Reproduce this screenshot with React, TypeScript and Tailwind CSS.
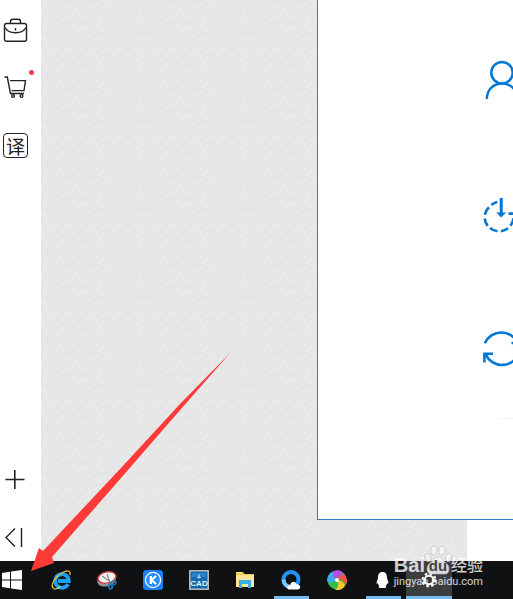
import type { ReactNode } from "react";

const iconBtn = "relative flex h-[25px] w-[25px] items-center justify-center text-[#222]";

function Wallpaper() {
  return (
    <svg className="absolute inset-0 h-full w-full" aria-hidden="true">
      <defs>
        <pattern id="weave" width="52" height="44" patternUnits="userSpaceOnUse">
          <rect width="52" height="44" fill="#e6e6e6" />
          <path
            d="M1 7l5-5M7 11l6-6M14 7l4-4M19 12l7-7M27 8l5-5M33 12l4-4M39 7l5-5M45 11l6-6M0 17l4-4M5 21l6-6M14 19l4-4M20 22l5-5M28 18l5-5M34 22l7-7M43 18l4-4M47 22l4-4M2 29l6-6M9 32l4-4M15 29l5-5M22 33l6-6M30 28l4-4M36 32l5-5M43 29l6-6M1 40l4-4M6 43l6-6M15 41l5-5M22 43l4-4M29 41l6-6M37 43l4-4M44 41l5-5"
            stroke="#ececec"
            strokeWidth="1.200"
          />
          <path
            d="M4 10l2-2M16 13l3-3M29 13l2-2M42 12l2-2M10 24l2-2M25 22l2-2M40 24l2-2M4 35l3-3M19 36l2-2M33 36l2-2M47 34l2-2"
            stroke="#e1e1e1"
          />
        </pattern>
      </defs>
      <rect width="100%" height="100%" fill="url(#weave)" />
    </svg>
  );
}

function Sidebar() {
  return (
    <aside className="relative flex w-[41px] shrink-0 flex-col justify-between bg-white pt-[17px] pb-[11px] pl-[3px]">
      <div className="flex flex-col gap-[33px]">
        <button className={iconBtn} aria-label="Toolbox">
          <svg width="25" height="25" viewBox="0 0 25 25" fill="none" stroke="currentColor" strokeWidth="1.400">
            <rect x="1.500" y="6.500" width="22" height="17.800" rx="2" />
            <path d="M7.500 6.500V4.500q0-2.300 2.300-2.300h5.400q2.300 0 2.300 2.300v2M2 10.500c2 4 6.500 5.300 10.500 5.300s8.500-1.300 10.500-5.300M12.500 11v2.500" />
          </svg>
        </button>
        <button className={iconBtn} aria-label="Shopping">
          <svg width="25" height="25" viewBox="0 0 25 25" fill="none" stroke="currentColor" strokeWidth="1.400">
            <path d="M1.500 2h2.800L7.500 18.500H21M7 5.600h15.500L21 15.600H8.600" />
            <circle cx="10" cy="21" r="1.400" />
            <circle cx="18.500" cy="21" r="1.400" />
          </svg>
          <span className="absolute -top-[5px] -right-[6px] h-[5px] w-[5px] rounded-full bg-[#fb3a48]" />
        </button>
        <button className={`${iconBtn} rounded-[4px] border border-[#222] text-[19px] leading-none font-['Noto_Sans_CJK_SC',sans-serif]`}>
          译
        </button>
      </div>
      <div className="flex flex-col gap-[33px]">
        <button className={iconBtn} aria-label="Add">
          <svg width="25" height="25" viewBox="0 0 25 25" stroke="currentColor" strokeWidth="1.600">
            <path d="M2.500 12.500h19M11.800 3v19" />
          </svg>
        </button>
        <button className={iconBtn} aria-label="Collapse">
          <svg width="25" height="25" viewBox="0 0 25 25" fill="none" stroke="currentColor" strokeWidth="1.400">
            <path d="M12 3.500L3 12.500l9 9M18.500 3v19" />
          </svg>
        </button>
      </div>
    </aside>
  );
}

function SettingsWindow() {
  return (
    <section className="flex flex-1 flex-col overflow-hidden border-b border-l border-[#2b83c6] bg-white pt-[60px] pl-[165px]">
      <div className="flex flex-col gap-[94px] text-[#0078d7]">
        <svg className="shrink-0" width="36" height="40" viewBox="0 0 36 40" fill="none" stroke="currentColor" strokeWidth="2.500">
          <circle cx="19" cy="12.700" r="10.700" />
          <path d="M3.800 39C4 29.500 10.500 23.400 19 23.400S34 29.500 34.200 39" />
        </svg>
        <svg className="shrink-0" width="36" height="40" viewBox="0 0 36 40" fill="none" stroke="currentColor" strokeWidth="2.600">
          <path d="M14.300 8a14.600 14.600 0 0 0-6 3M6 13.300a14.600 14.600 0 0 0-4.200 7.400M1.700 24.500a14.600 14.600 0 0 0 3 7.400M7 34a14.600 14.600 0 0 0 7.500 3.200M18 37.200a14.600 14.600 0 0 0 7-3M27.300 31.800a14.600 14.600 0 0 0 3.200-7.600M25.500 19.600h7" />
          <path d="M18.200 4v16" strokeWidth="3" />
          <path d="M13.200 18.500h10l-5 5z" fill="currentColor" stroke="none" />
        </svg>
        <svg className="shrink-0" width="36" height="40" viewBox="0 0 36 40" fill="none" stroke="currentColor" strokeWidth="2.600">
          <path d="M1.800 15.300a18 18 0 0 1 33 0M36 25a18 18 0 0 1-33.500 1" />
          <path d="M10 25.700H1.400v8.700M36 4v11h-7.500" />
        </svg>
      </div>
      <hr className="mt-[50px] ml-[16px] border-[#f2f2f2]" />
    </section>
  );
}

type Task = { name: string; icon: ReactNode; running?: boolean; active?: boolean };

const tasks: Task[] = [
  {
    name: "Internet Explorer",
    icon: (
      <>
        <path d="M17 14.200a6.800 6.800 0 1 1 .8-3.200H7" fill="none" stroke="#1ba1f2" strokeWidth="3.800" />
        <path d="M2.500 18.500C-1.500 15 5 6 11.500 2.500s8-.8 7.500 2.500" fill="none" stroke="#e9bd35" strokeWidth="1.300" />
        <path d="M2.500 18.500c2 1.500 5-.5 7-2" fill="none" stroke="#f5d25d" strokeWidth="1.200" />
      </>
    ),
  },
  {
    name: "Snipping Tool",
    icon: (
      <>
        <ellipse cx="9.500" cy="10.500" rx="9.300" ry="5.800" fill="#8c9196" transform="rotate(-12 9.500 10.500)" />
        <ellipse cx="10" cy="7.500" rx="9" ry="5.500" fill="#f5f5f5" stroke="#d74545" strokeWidth="1.500" transform="rotate(-12 10 7.500)" />
        <path d="M5 6l8 5.500M10 4l3 8.500" stroke="#7b858e" strokeWidth="1.100" />
        <g fill="none" stroke="#1681cc" strokeWidth="1.500">
          <ellipse cx="16.500" cy="13" rx="2.600" ry="1.700" transform="rotate(-20 16.500 13)" />
          <ellipse cx="13.500" cy="16.500" rx="1.700" ry="2.500" transform="rotate(-15 13.500 16.500)" />
        </g>
      </>
    ),
  },
  {
    name: "KuGou",
    icon: (
      <>
        <rect width="20" height="20" rx="3.500" fill="#1b80fa" />
        <circle cx="10" cy="10" r="7.600" fill="#2b8bfb" stroke="#eef6ff" strokeWidth="1.400" />
        <path d="M7.800 6v8M13 6l-4.500 4 4.500 4" fill="none" stroke="#fff" strokeWidth="2.200" />
      </>
    ),
  },
  {
    name: "CAD",
    icon: (
      <>
        <rect x=".8" y=".8" width="18.400" height="18.400" fill="#1767ae" stroke="#b3b7ba" strokeWidth="1.600" />
        <path d="M3 3h14v4H3z" fill="#2385d0" />
        <path d="M10 4.500v4M8 7.500h4" stroke="#c2def1" strokeWidth="1.200" />
        <text x="10" y="15.500" textAnchor="middle" fontSize="8" fontWeight="bold" fontFamily="Liberation Sans, sans-serif" fill="#e5f2fa">CAD</text>
      </>
    ),
  },
  {
    name: "File Explorer",
    icon: (
      <>
        <path d="M1 2h7l1.500 2H19v13H1z" fill="#f4c64e" />
        <path d="M2 2.800h5" stroke="#fff0a9" strokeWidth="1" />
        <path d="M1 5h18v12H1z" fill="#fde59a" />
        <path d="M4 18v-8h12v8h-3v-4H7v4z" fill="#36b2e5" />
      </>
    ),
  },
  {
    name: "QQ Browser",
    running: true,
    icon: (
      <>
        <circle cx="10" cy="9.500" r="7.500" fill="none" stroke="#2293f3" strokeWidth="4" />
        <path d="M2.500 9.500a7.500 7.500 0 0 0 6 7.300" fill="none" stroke="#75c8fb" strokeWidth="4" />
        <path d="M9 19.500c-4 0-3.500-4.500 0-4.300 1-4.700 6-4.500 6.500-.9 4.500-.5 5 5.200 1 5.200z" fill="#fff" />
      </>
    ),
  },
  {
    name: "360 Album",
    icon: (
      <>
        <circle cx="10" cy="10" r="9.500" fill="#35bd45" />
        <path d="M10 10C6 8 5 4 7 .9c5-1.900 9 .6 11 4.100-3-1.500-6-.5-8 5z" fill="#b94be5" />
        <path d="M10 10c2-4.500 5-6 8-5 3 4 2.500 9 0 11 .5-4-2.500-7-8-6z" fill="#f4514a" />
        <path d="M10 10c4.500.5 7.500 3 8 6-3 4-7 5-10 3.500 3.500-1.500 4-5 2-9.500z" fill="#ffc928" />
        <path d="M10 10c-4 3-8 3.500-9.800 1.500C-.2 6 2.500 2.500 7 .9 5 4 6 8.500 10 10z" fill="#3fa9f1" />
        <circle cx="10" cy="10" r="2" fill="#fff" />
      </>
    ),
  },
  {
    name: "QQ",
    running: true,
    icon: (
      <path
        d="M9.500 2C6 2 5 4.500 5 8l-1.400 4.500c0 1.500.5 1.500 1.200.8.200 1 .8 2 1.500 2.700-1.500 1.500-.3 2 3.200 2s4.700-.5 3.200-2c.7-.7 1.300-1.700 1.500-2.700.7.700 1.200.7 1.200-.8L14 8c0-3.500-1-6-4.500-6z"
        fill="#fff"
      />
    ),
  },
  {
    name: "Settings",
    running: true,
    active: true,
    icon: (
      <g fill="none" stroke="#fff">
        <circle cx="10" cy="10" r="4.300" strokeWidth="2" />
        <circle cx="10" cy="10" r="6.300" strokeWidth="2.400" strokeDasharray="2.470 2.470" />
      </g>
    ),
  },
];

function Taskbar() {
  return (
    <nav className="flex h-[38px] bg-[#101112]">
      <button className="flex w-[38px] items-center pl-[2px]" aria-label="Start">
        <svg width="20" height="20" viewBox="0 0 20 20" fill="#fff">
          <path d="M0 3l8-1.200v7.700H0zM9 1.600L20 0v9.500H9zM0 10.500h8v7.700L0 17zM9 10.500h11V20L9 18.400z" />
        </svg>
      </button>
      {tasks.map((t) => (
        <button
          key={t.name}
          aria-label={t.name}
          className={`flex w-[46px] flex-col items-center ${t.active ? "bg-[#3c3d3e]" : ""}`}
        >
          <span className="flex flex-1 items-center pt-[3px]">
            <svg width="20" height="20" viewBox="0 0 20 20">{t.icon}</svg>
          </span>
          <span className={`h-[3px] ${t.running ? "bg-[#76b9ed]" : ""} ${t.active ? "w-full" : "w-[35px]"}`} />
        </button>
      ))}
    </nav>
  );
}

function Watermark() {
  return (
    <div className="pointer-events-none absolute right-[30px] bottom-[10px] flex flex-col items-end text-white/80">
      <div className="flex h-[20px] items-end gap-[2px]">
        <span className="font-['Liberation_Sans',sans-serif] text-[20px] leading-[20px] font-bold">Bai</span>
        <span className="relative flex h-[20px] w-[22px] items-end justify-center">
          <svg className="absolute bottom-0 -left-[3px]" width="28" height="30" viewBox="0 0 28 30" fill="#f4f4f4" fillOpacity=".85" stroke="#bbb" strokeWidth=".6">
            <ellipse cx="4" cy="12.500" rx="3" ry="4.200" transform="rotate(-15 4 12.500)" />
            <ellipse cx="10" cy="5.500" rx="3" ry="4.500" />
            <ellipse cx="18" cy="5.500" rx="3" ry="4.500" />
            <ellipse cx="24.500" cy="12.500" rx="3" ry="4.200" transform="rotate(15 24.500 12.500)" />
            <path d="M14 12c-4 0-5 4-8.500 6.500S2 29 7 29h14c5 0 5-8 1.500-10.500S18 12 14 12z" />
          </svg>
          <span className="relative font-['Liberation_Sans',sans-serif] text-[15px] leading-[18px] font-bold text-[#444]">du</span>
        </span>
        <span className="font-['Noto_Sans_CJK_SC',sans-serif] text-[16px] leading-[22px] font-medium">经验</span>
      </div>
      <span className="font-['Roboto',sans-serif] text-[11px] leading-[14px]">jingyan.baidu.com</span>
    </div>
  );
}

export default function App() {
  return (
    <div className="relative flex min-h-screen flex-col overflow-hidden bg-white">
      <main className="flex flex-1">
        <Sidebar />
        <div className="relative flex min-w-0 flex-1">
          <Wallpaper />
          <div className="relative ml-[276px] flex min-w-0 flex-1 flex-col">
            <SettingsWindow />
            <div className="flex h-[41px] justify-end">
              <div className="w-[46px] bg-white" />
            </div>
          </div>
        </div>
      </main>
      <Taskbar />
      <Watermark />
      {/* pointer to the start button */}
      <svg className="pointer-events-none absolute bottom-[27px] left-[31px]" width="200" height="220" viewBox="0 0 200 220" fill="#fe3a39">
        <path d="M0 219l8-23 4 3 77-82 60-65L200 0l-50 57-60 69-69 79 2 6z" />
      </svg>
    </div>
  );
}
